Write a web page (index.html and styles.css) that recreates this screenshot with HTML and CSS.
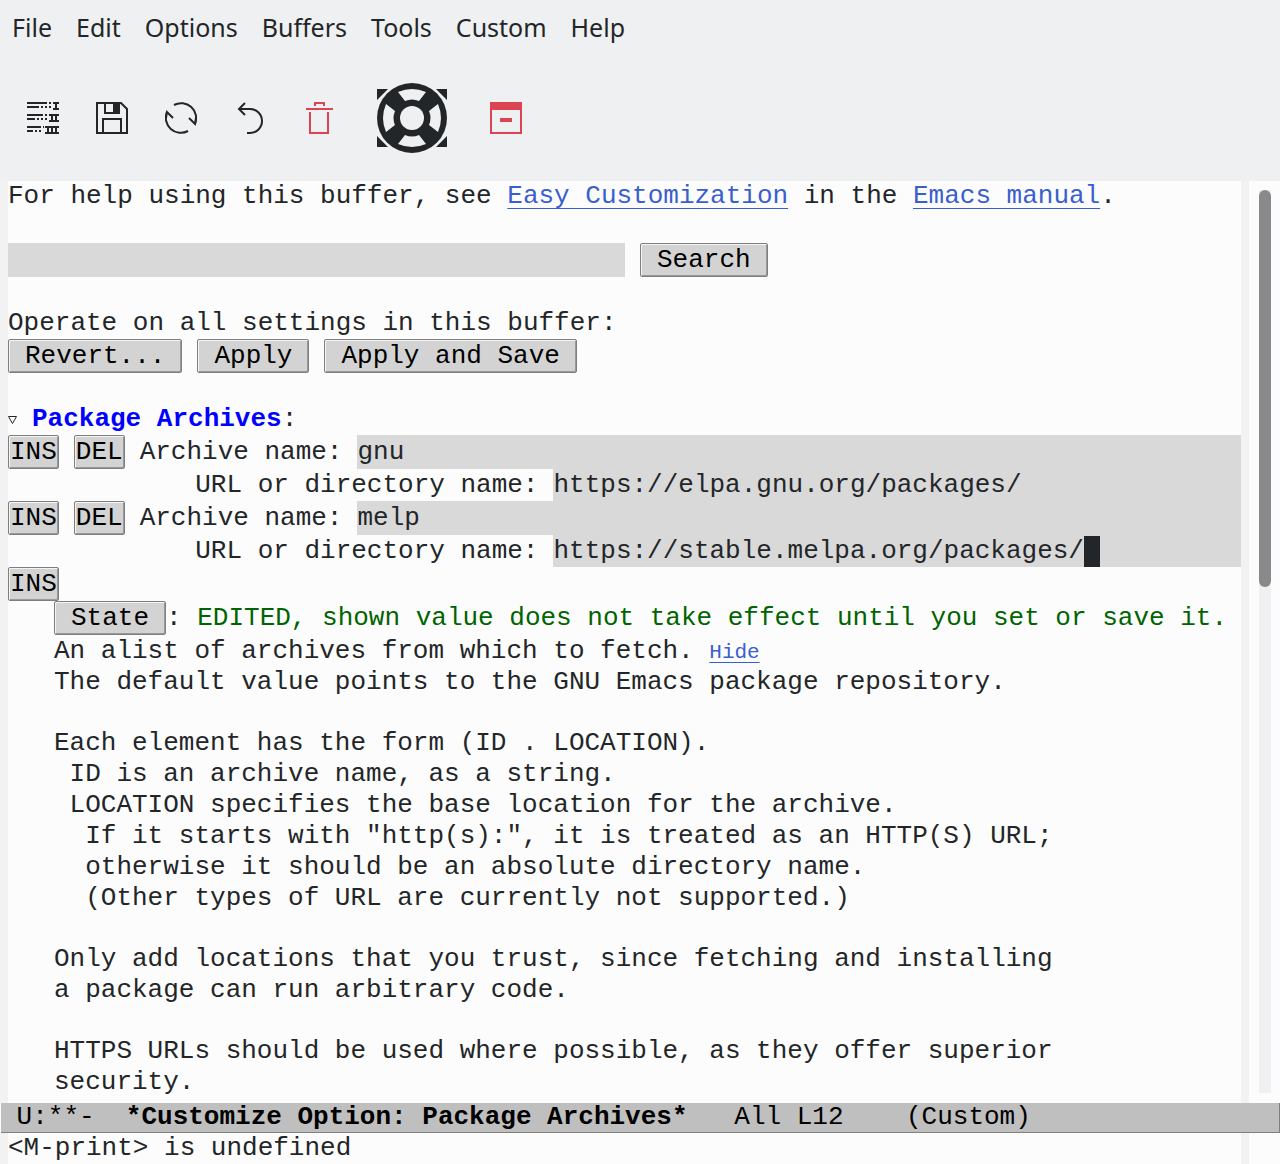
FILE: index.html
```html
<!DOCTYPE html>
<html lang="en">
<head>
    <meta charset="UTF-8">
    <title>Customize Option: Package Archives</title>
    <link rel="stylesheet" href="styles.css">
</head>
<body>

    <nav class="menubar">
        <button type="button">File</button>
        <button type="button">Edit</button>
        <button type="button">Options</button>
        <button type="button">Buffers</button>
        <button type="button">Tools</button>
        <button type="button">Custom</button>
        <button type="button">Help</button>
    </nav>

    <div class="toolbar">
        <button type="button" aria-label="Apply settings">
            <svg width="32" height="32" viewBox="0 0 32 32" fill="none" stroke="#232629" stroke-width="2">
                <path d="M0 1h20M0 5h12M0 13h16M0 17h8M0 25h14M0 29h6"/>
                <path d="M22 1h2M14 5h2M18 5h2M22 5h2M18 13h2M10 17h2M14 17h2M18 17h2M8 29h2M12 29h2M16 25h1"/>
                <path d="M26 1h6M26 7h6M29 1v6M22 13h10M22 19h10M25 13v6M29 13v6M18 25h14M18 31h14M21 25v6M25 25v6M29 25v6"/>
            </svg>
        </button>
        <button type="button" aria-label="Save">
            <svg width="32" height="32" viewBox="0 0 32 32" fill="none" stroke="#232629" stroke-width="2">
                <path d="M1 1h24l6 6v24H1zM9 1v10h14V1M7 31V17h18v14"/>
                <path d="M17 1h6v10h-6z" fill="#232629" stroke="none"/>
            </svg>
        </button>
        <button type="button" aria-label="Revert">
            <svg width="32" height="32" viewBox="0 0 32 32" fill="none" stroke="#232629" stroke-width="2">
                <path d="M9 3A15 15 0 0 1 30 22M24 16l6 6 1-6M23 29A15 15 0 0 1 2 10M8 16l-6-6-1 6"/>
            </svg>
        </button>
        <button type="button" aria-label="Undo">
            <svg width="32" height="32" viewBox="0 0 32 32" fill="none" stroke="#232629" stroke-width="2">
                <path d="M11 1L5 7l6 6M5 7h11a12 12 0 0 1 0 24h-3"/>
            </svg>
        </button>
        <button type="button" aria-label="Erase">
            <svg width="32" height="32" viewBox="0 0 32 32" fill="none" stroke="#da4453" stroke-width="2">
                <path d="M3 7h27M12 4V1h9v3M7 10v21h18V10"/>
            </svg>
        </button>
        <button type="button" class="wide" aria-label="Help">
            <svg width="70" height="70" viewBox="0 0 70 70">
                <path fill="#232629" d="M0 6h11L0 17zM70 6H59l11 11zM0 64h11L0 53zM70 64H59l11-11z"/>
                <circle cx="35" cy="35" r="35" fill="#232629"/>
                <path fill="#eff0f1" d="M21 9q14-6 28 0l-7 9q-7-3-14 0zM21 61q14 6 28 0l-7-9q-7 3-14 0zM9 21q-6 14 0 28l9-7q-3-7 0-14zM61 21q6 14 0 28l-9-7q3-7 0-14z"/>
                <circle cx="35" cy="35" r="12" fill="#eff0f1"/>
            </svg>
        </button>
        <button type="button" aria-label="Exit">
            <svg width="32" height="32" viewBox="0 0 32 32" fill="none" stroke="#da4453" stroke-width="2">
                <path d="M1 1h30v30H1z"/>
                <path d="M0 0h32v8H0zM10 16h12v4H10z" fill="#da4453" stroke="none"/>
            </svg>
        </button>
    </div>

    <div class="window">
        <main class="buffer">
            <p>For help using this buffer, see <a href="#">Easy Customization</a> in the <a href="#">Emacs manual</a>.</p>

            <form class="row search">
                <input type="text" class="search-field" aria-label="Search custom options">
                <button type="button" class="btn">Search</button>
            </form>

            <p>Operate on all settings in this buffer:</p>
            <div class="row actions">
                <button type="button" class="btn">Revert...</button>
                <button type="button" class="btn">Apply</button>
                <button type="button" class="btn">Apply and Save</button>
            </div>

            <div class="option">
                <button type="button" class="toggle" aria-label="Hide value">
                    <svg width="9" height="10" viewBox="0 0 9 10" fill="none" stroke="#232629"><path d="M0.5 1.5h8l-4 7z"/></svg>
                </button>
                <h1>Package Archives<span>:</span></h1>
            </div>

            <div class="row">
                <button type="button" class="btn small">INS</button>
                <button type="button" class="btn small">DEL</button>
                <label for="name1">Archive name:</label>
                <div class="field"><input type="text" id="name1" value="gnu"></div>
            </div>
            <div class="row url">
                <label for="url1">URL or directory name:</label>
                <div class="field"><input type="text" id="url1" value="https://elpa.gnu.org/packages/"></div>
            </div>
            <div class="row">
                <button type="button" class="btn small">INS</button>
                <button type="button" class="btn small">DEL</button>
                <label for="name2">Archive name:</label>
                <div class="field"><input type="text" id="name2" value="melp"></div>
            </div>
            <div class="row url">
                <label for="url2">URL or directory name:</label>
                <div class="field"><input type="text" id="url2" class="current" value="https://stable.melpa.org/packages/"><span class="cursor"></span></div>
            </div>
            <div class="row">
                <button type="button" class="btn small">INS</button>
            </div>

            <div class="details">
                <div class="state">
                    <button type="button" class="btn">State</button>
                    <p>: <span class="edited">EDITED, shown value does not take effect until you set or save it.</span></p>
                </div>
<pre class="doc">An alist of archives from which to fetch. <a href="#" class="hide">Hide</a>
The default value points to the GNU Emacs package repository.</pre>
<pre class="doc">Each element has the form (ID . LOCATION).
 ID is an archive name, as a string.
 LOCATION specifies the base location for the archive.
  If it starts with "http(s):", it is treated as an HTTP(S) URL;
  otherwise it should be an absolute directory name.
  (Other types of URL are currently not supported.)</pre>
<pre class="doc">Only add locations that you trust, since fetching and installing
a package can run arbitrary code.</pre>
<pre class="doc">HTTPS URLs should be used where possible, as they offer superior
security.</pre>
            </div>
        </main>
        <div class="scrollbar">
            <div class="track"><div class="thumb"></div></div>
        </div>
    </div>

    <pre class="modeline"> U:**-  <b>*Customize Option: Package Archives*</b>   All L12    (Custom)</pre>

    <div class="echo">
        <p>&lt;M-print&gt; is undefined</p>
    </div>

</body>
</html>
```
FILE: styles.css
```css
* {
    box-sizing: border-box;
}

body {
    margin: 0;
    min-height: 100vh;
    display: flex;
    flex-direction: column;
    background-color: #fcfcfc;
    color: #232629;
    font-family: "Liberation Mono", monospace;
    font-size: 26px;
    line-height: 31px;
}

p, h1, pre {
    margin: 0;
    font: inherit;
}

button, input {
    margin: 0;
    padding: 0;
    border: none;
    background: none;
    color: inherit;
    font: inherit;
}

a {
    color: #3a5fcd;
    text-decoration: underline;
    text-decoration-thickness: 1px;
    text-underline-offset: 5px;
    text-decoration-skip-ink: none;
}

/* menu and tool bar */

.menubar {
    display: flex;
    gap: 24px;
    padding: 9px 12px;
    background-color: #eff0f1;
    font-family: "Noto Sans", sans-serif;
    font-size: 25px;
    line-height: 36px;
}

.toolbar {
    display: flex;
    align-items: center;
    height: 127px;
    padding-left: 8px;
    background-color: #eff0f1;
}

.toolbar button {
    width: 69px;
    height: 70px;
}

.toolbar .wide {
    width: 118px;
}

.toolbar svg {
    display: block;
    margin: 0 auto;
}

/* buffer */

.window {
    display: flex;
    flex: 1;
}

.buffer {
    flex: 1;
    min-width: 0;
    border: solid #f2f2f2;
    border-width: 0 8px;
    white-space: nowrap;
}

.row {
    display: flex;
    gap: 15px;
}

.btn {
    height: 34px;
    padding: 0 16px;
    border: 1px solid #7f7f7f;
    border-radius: 2px;
    background-color: #d3d3d3;
    color: #000;
    box-shadow: inset 1px 1px #f4f4f4, inset -1px -1px #999;
    line-height: 32px;
}

.small {
    padding: 0 1px;
}

.search {
    padding: 31px 0;
}

.search-field {
    width: 617px;
    background-color: #d9d9d9;
}

.actions {
    padding-bottom: 31px;
}

.option {
    display: flex;
    align-items: center;
    gap: 15px;
}

.option h1 {
    color: #0000ff;
    font-weight: bold;
}

.option span {
    color: #232629;
    font-weight: normal;
}

.toggle {
    display: flex;
}

.row label {
    line-height: 34px;
}

.field {
    display: flex;
    align-items: center;
    flex: 1;
    background-color: #d9d9d9;
}

.field input {
    width: 100%;
}

.field .current {
    width: 34ch;
}

.cursor {
    width: 1ch;
    height: 31px;
    background-color: #232629;
}

.url {
    padding-left: 12ch;
}

.url label {
    line-height: 32px;
}

.details {
    padding-left: 46px;
}

.state {
    display: flex;
    align-items: center;
    padding-bottom: 1px;
}

.edited {
    color: #006400;
}

.doc {
    margin-bottom: 30px;
}

.doc:last-child {
    margin-bottom: 0;
}

.hide {
    font-size: 21px;
    line-height: 21px;
    text-underline-offset: 4px;
}

/* scroll bar */

.scrollbar {
    display: flex;
    width: 31px;
    padding: 9px 9px 10px 10px;
}

.track {
    flex: 1;
    background-color: #eff0f1;
}

.thumb {
    height: 44%;
    border-radius: 6px;
    background-color: #88898b;
}

/* mode line and echo area */

.modeline {
    margin-left: 1px;
    border: 1px solid #7f7f7f;
    border-width: 0 1px 1px 0;
    background-color: #bfbfbf;
    color: #000;
    line-height: 29px;
}

.modeline b {
    font-weight: bold;
}

.echo {
    margin-right: 31px;
    border: solid #f2f2f2;
    border-width: 0 8px;
}
```
